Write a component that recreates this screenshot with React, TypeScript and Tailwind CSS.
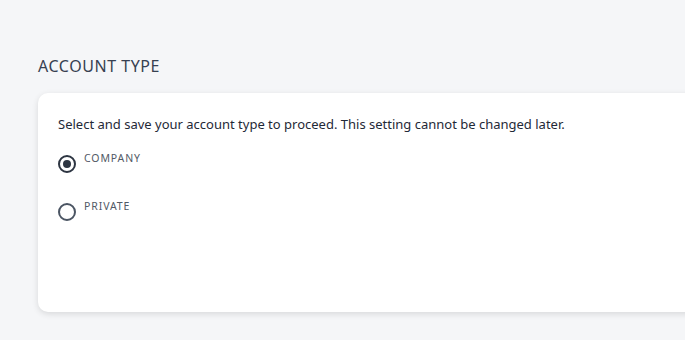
export default function App() {
  return (
    <div
      className="w-full h-[340px] overflow-hidden bg-[#f5f6f8]"
      style={{ fontFamily: '"Noto Sans", "Open Sans", sans-serif' }}
    >
      <div className="pl-[38px] pt-[54px]">
        <h2 className="text-[16px] leading-[24px] tracking-[0.55px] text-[#374151] font-normal">
          ACCOUNT TYPE
        </h2>
        <div className="mt-[15px] w-[700px] h-[219px] bg-white rounded-[10px] shadow-[0_2px_6px_rgba(0,0,0,0.12)] pl-[20px] pt-[21px]">
          <p className="text-[13px] leading-[20px] text-[#1f2937]">
            Select and save your account type to proceed. This setting cannot be changed later.
          </p>
          <div className="mt-[17px] flex flex-col gap-[26px]">
            <label className="flex items-start gap-[8px]">
              <span className="mt-[4px] w-[18px] h-[18px] rounded-full border-2 border-[#2d3542] flex items-center justify-center">
                <span className="w-[8px] h-[8px] rounded-full bg-[#2d3542]" />
              </span>
              <span className="text-[10.5px] leading-[14px] tracking-[0.9px] text-[#525a66]">COMPANY</span>
            </label>
            <label className="flex items-start gap-[8px]">
              <span className="mt-[4px] w-[18px] h-[18px] rounded-full border-2 border-[#4b5563]" />
              <span className="text-[10.5px] leading-[14px] tracking-[0.9px] text-[#525a66]">PRIVATE</span>
            </label>
          </div>
        </div>
      </div>
    </div>
  );
}
